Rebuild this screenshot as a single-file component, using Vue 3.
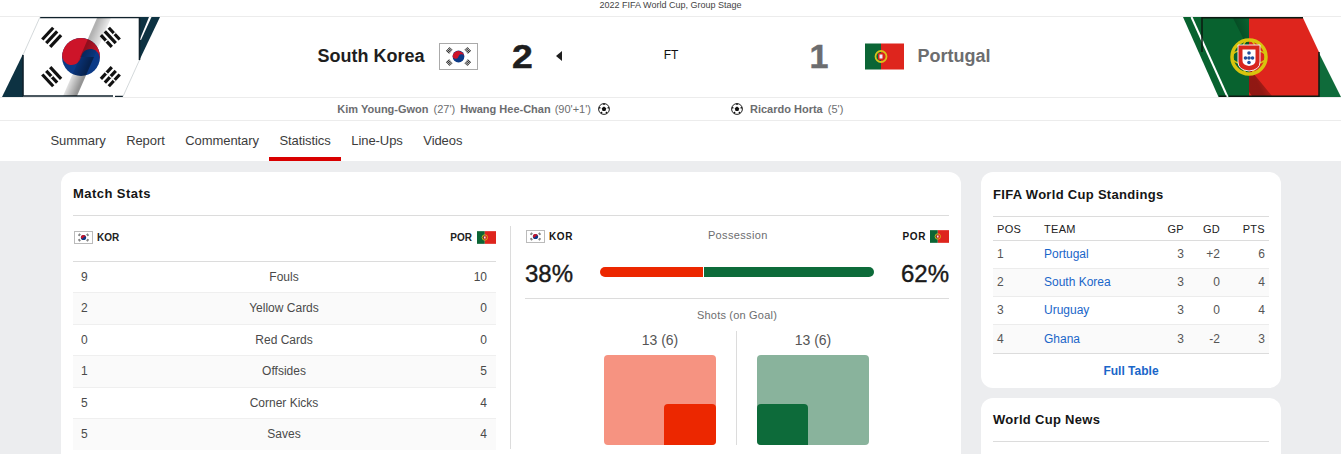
<script setup>
const stats = [
  { a: '9', label: 'Fouls', b: '10' },
  { a: '2', label: 'Yellow Cards', b: '0' },
  { a: '0', label: 'Red Cards', b: '0' },
  { a: '1', label: 'Offsides', b: '5' },
  { a: '5', label: 'Corner Kicks', b: '4' },
  { a: '5', label: 'Saves', b: '4' },
]
const standings = [
  { pos: 1, team: 'Portugal', gp: 3, gd: '+2', pts: 6 },
  { pos: 2, team: 'South Korea', gp: 3, gd: '0', pts: 4 },
  { pos: 3, team: 'Uruguay', gp: 3, gd: '0', pts: 4 },
  { pos: 4, team: 'Ghana', gp: 3, gd: '-2', pts: 3 },
]
const nav = ['Summary', 'Report', 'Commentary', 'Statistics', 'Line-Ups', 'Videos']
const barY = [-7, -1.6, 3.8]
const trigrams = [
  { x: -29.3, y: -19.7, r: -47, broken: [false, false, false] },
  { x: 29.3, y: -19.7, r: 47, broken: [true, false, true] },
  { x: -29.3, y: 19.7, r: 47, broken: [false, true, false] },
  { x: 29.3, y: 19.7, r: -47, broken: [true, true, true] },
]
</script>

<template>
  <div class="page">
    <svg class="defs" width="0" height="0" aria-hidden="true">
      <defs>
        <symbol id="kor" viewBox="0 0 39 26">
          <rect width="39" height="26" fill="#fff" />
          <g transform="translate(19.5 13)">
            <circle r="6.2" fill="#0b3a87" />
            <path d="M-6.1-1A6.2 6.2 0 0 1 6.1 1A3.1 3.1 0 0 0 0 0A3.100 3.100 0 0 1-6.100-1Z" fill="#cd1429" />
            <g stroke="#222" stroke-width="4.500" stroke-dasharray="1 .6">
              <path d="M-11.500-4.500L-8-8.500" />
              <path d="M11.500-4.500L8-8.500" />
              <path d="M-11.500 4.500L-8 8.500" />
              <path d="M11.500 4.500L8 8.500" />
            </g>
          </g>
        </symbol>
        <symbol id="por" viewBox="0 0 39 26">
          <rect width="16" height="26" fill="#0b6535" />
          <rect x="16" width="23" height="26" fill="#de251d" />
          <circle cx="16" cy="13" r="5.500" fill="none" stroke="#d9c21a" stroke-width="1.800" />
          <rect x="13" y="9.500" width="6" height="7" rx="1" fill="#d8261d" />
          <rect x="14.500" y="11" width="3" height="4" fill="#eef" />
        </symbol>
        <symbol id="ball" viewBox="0 0 12 12">
          <circle cx="6" cy="6" r="5.400" fill="#fff" stroke="#222" stroke-width="1" />
          <path d="M6 3.600L8.300 5.300 7.400 8H4.600L3.700 5.300Z" fill="#111" />
          <path d="M6 .6V2M1 4.600L2.400 5M11 4.600L9.600 5M3 10.400L4 9M9 10.400L8 9" stroke="#111" stroke-width="1.400" />
        </symbol>
      </defs>
    </svg>

    <div class="competition">2022 FIFA World Cup, Group Stage</div>

    <header class="banner">
      <svg class="art" width="160" height="80" viewBox="0 17 160 80" aria-hidden="true">
        <defs>
          <linearGradient id="foldTop" gradientUnits="userSpaceOnUse" x1="98" y1="20" x2="112" y2="26">
            <stop offset="0" stop-color="#000" stop-opacity=".3" />
            <stop offset="1" stop-color="#000" stop-opacity="0" />
          </linearGradient>
          <linearGradient id="foldBottom" gradientUnits="userSpaceOnUse" x1="62" y1="88" x2="76" y2="94">
            <stop offset="0" stop-color="#000" stop-opacity="0" />
            <stop offset="1" stop-color="#000" stop-opacity=".42" />
          </linearGradient>
        </defs>
        <path d="M2 97L23 54V97Z" fill="#0d3242" />
        <path d="M139 17H160L139 61Z" fill="#0d3242" />
        <path d="M149 17H151.500L141 40H139.600Z" fill="#fff" />
        <path d="M40 17H139V60L123 97H23V55Z" fill="#fff" />
        <path d="M40 17.500H139.500V60M23 55V96H113M115 96.500H123" fill="none" stroke="#10222c" stroke-width="1.600" />
        <path d="M139.500 60L123 96.500M40 17L23 55" fill="none" stroke="#c9cfd2" stroke-width=".8" />
        <g transform="translate(81 57)">
          <circle r="19" fill="#0b3a87" />
          <path d="M-18.800-3A19 19 0 0 1 18.800 3A9.500 9.500 0 0 0 0 0A9.500 9.500 0 0 1-18.800-3Z" fill="#cd1429" />
          <g v-for="t in trigrams" :key="t.x + '' + t.y" :transform="`translate(${t.x} ${t.y}) rotate(${t.r})`" fill="#111">
            <template v-for="(y, i) in barY" :key="i">
              <rect x="-8" :y="y" width="16" height="3.200" />
              <rect v-if="t.broken[i]" x="-.7" :y="y - .1" width="1.400" height="3.400" fill="#fff" />
            </template>
          </g>
        </g>
        <path d="M97 18H111L94 57H80Z" fill="url(#foldTop)" />
        <path d="M80 57H94L77 96H63Z" fill="url(#foldBottom)" />
      </svg>

      <div class="side side-left">
        <span class="team-name">South Korea</span>
        <svg class="flag flag-bordered" width="39" height="27"><use href="#kor" /></svg>
        <span class="score score-wide">2</span>
        <span class="winner"></span>
      </div>
      <div class="status">FT</div>
      <div class="side side-right muted">
        <span class="score">1</span>
        <svg class="flag" width="39" height="27"><use href="#por" /></svg>
        <span class="team-name">Portugal</span>
      </div>

      <svg class="art" width="158" height="80" viewBox="1183 17 158 80" aria-hidden="true">
        <defs>
          <linearGradient id="shadeA" gradientUnits="userSpaceOnUse" x1="1233" y1="30" x2="1250" y2="24">
            <stop offset="0" stop-color="#000" stop-opacity=".3" />
            <stop offset="1" stop-color="#000" stop-opacity="0" />
          </linearGradient>
          <linearGradient id="shadeB" gradientUnits="userSpaceOnUse" x1="1258" y1="84" x2="1274" y2="76">
            <stop offset="0" stop-color="#000" stop-opacity=".35" />
            <stop offset="1" stop-color="#000" stop-opacity="0" />
          </linearGradient>
        </defs>
        <path d="M1183 17H1249V97H1218.500Z" fill="#08622f" />
        <path d="M1191.500 17L1227.500 97" fill="none" stroke="#fff" stroke-width="2" />
        <path d="M1319 53L1341 97H1319Z" fill="#0f6b3a" />
        <path d="M1249 18H1303L1319 52V96H1249Z" fill="#de251d" />
        <path d="M1233 18H1249V50Z" fill="url(#shadeA)" />
        <path d="M1249 68L1272 96H1252L1249 92Z" fill="url(#shadeB)" />
        <path d="M1202 52V17.800H1303M1219 96.200H1226.500M1229 96.200H1319V52" fill="none" stroke="#0b1a12" stroke-width="1.500" />
        <g transform="translate(1249 57)">
          <circle r="17" fill="none" stroke="#d8c40e" stroke-width="3.500" />
          <ellipse rx="17" ry="8" fill="none" stroke="#d8c40e" stroke-width="1.500" />
          <ellipse rx="8" ry="17" fill="none" stroke="#d8c40e" stroke-width="1.500" />
          <path d="M-11-12H11V5Q11 13 0 14Q-11 13-11 5Z" fill="#d8261d" stroke="#eee" stroke-width="1" />
          <path d="M-6.500-7.500H6.500V4Q6.500 8 0 9Q-6.500 8-6.500 4Z" fill="#fff" />
          <g fill="#24509c">
            <circle cy="-4" r="1.800" /><circle cx="-3.500" cy="1" r="1.800" /><circle cy="1" r="1.800" /><circle cx="3.500" cy="1" r="1.800" /><circle cy="5.500" r="1.800" />
          </g>
        </g>
      </svg>
    </header>

    <div class="scorers">
      <div class="scorer-side scorer-left">
        <b>Kim Young-Gwon</b><span>(27')</span>
        <b class="second">Hwang Hee-Chan</b><span>(90'+1')</span>
        <svg class="ball" width="12" height="12"><use href="#ball" /></svg>
      </div>
      <div class="scorer-gap"></div>
      <div class="scorer-side">
        <svg class="ball" width="12" height="12"><use href="#ball" /></svg>
        <b>Ricardo Horta</b><span>(5')</span>
      </div>
    </div>

    <nav class="tabs">
      <a v-for="item in nav" :key="item" class="tab" :class="{ active: item === 'Statistics' }">{{ item }}</a>
    </nav>

    <main class="content">
      <section class="card stats-card">
        <h2 class="card-title">Match Stats</h2>
        <div class="stats-body">
          <div class="stats-table">
            <div class="team-head">
              <span class="team-tag">
                <svg class="mini mini-bordered" width="19" height="13"><use href="#kor" /></svg>KOR
              </span>
              <span class="team-tag tag-right">POR<svg class="mini" width="19" height="13"><use href="#por" /></svg></span>
            </div>
            <div v-for="(row, i) in stats" :key="row.label" class="stat-row" :class="{ shaded: i % 2 === 1 }">
              <span>{{ row.a }}</span>
              <span class="stat-label">{{ row.label }}</span>
              <span class="stat-right">{{ row.b }}</span>
            </div>
          </div>
          <div class="charts">
            <div class="poss-head">
              <span class="team-tag strong">
                <svg class="mini mini-bordered" width="19" height="13"><use href="#kor" /></svg>KOR
              </span>
              <span class="chart-title">Possession</span>
              <span class="team-tag strong">POR<svg class="mini" width="19" height="13"><use href="#por" /></svg></span>
            </div>
            <div class="poss-row">
              <span class="pct">38%</span>
              <div class="bar">
                <div class="bar-a" style="width: 37.7%"></div>
                <div class="bar-b"></div>
              </div>
              <span class="pct">62%</span>
            </div>
            <div class="shots-title">Shots (on Goal)</div>
            <div class="shots">
              <div class="shot-col shot-left">
                <div class="shot-num">13 (6)</div>
                <div class="goal goal-red"><div class="on-goal on-red"></div></div>
              </div>
              <div class="shot-col shot-right">
                <div class="shot-num">13 (6)</div>
                <div class="goal goal-green"><div class="on-goal on-green"></div></div>
              </div>
            </div>
          </div>
        </div>
      </section>

      <aside class="rail">
        <section class="card side-card">
          <h2 class="card-title side-title">FIFA World Cup Standings</h2>
          <div class="st-row st-head">
            <span>POS</span><span>TEAM</span><span class="num">GP</span><span class="num">GD</span><span class="num">PTS</span>
          </div>
          <div v-for="(r, i) in standings" :key="r.team" class="st-row" :class="{ shaded: i % 2 === 1 }">
            <span>{{ r.pos }}</span>
            <a class="link">{{ r.team }}</a>
            <span class="num">{{ r.gp }}</span>
            <span class="num">{{ r.gd }}</span>
            <span class="num">{{ r.pts }}</span>
          </div>
          <a class="full-table">Full Table</a>
        </section>
        <section class="card side-card news">
          <h2 class="card-title side-title">World Cup News</h2>
        </section>
      </aside>
    </main>
  </div>
</template>

<style>
html, body { margin: 0; background: #fff; overflow: hidden; }
</style>

<style scoped>
.page {
  width: 1341px;
  height: 454px;
  overflow: hidden;
  background: #ecedef;
  font-family: "Liberation Sans", Arial, sans-serif;
  color: #333;
}
.defs { position: absolute; }
.competition {
  height: 16px;
  line-height: 10px;
  background: #fff;
  border-bottom: 1px solid #ececec;
  text-align: center;
  font-size: 9px;
  color: #444;
}
.banner {
  height: 80px;
  background: #fff;
  border-bottom: 1px solid #ececec;
  display: grid;
  grid-template-columns: 160px 1fr 218px 1fr 158px;
  align-items: center;
}
.art { display: block; }
.side { display: flex; align-items: center; height: 78px; padding-bottom: 2px; color: #1e1e1e; }
.side-left { justify-content: flex-end; }
.side-right { padding-left: 29px; }
.muted { color: #6c6d6f; }
.team-name { font-size: 18px; font-weight: 700; }
.flag { display: block; }
.flag-bordered { box-sizing: border-box; border: 1px solid #aaa; margin: 0 36px 0 14px; }
.side-right .flag { margin: 0 13px 0 37px; }
.score { font-size: 34px; font-weight: 700; line-height: 1; -webkit-text-stroke: .5px currentColor; }
.score-wide { transform: scaleX(1.1); transform-origin: right center; }
.winner {
  width: 0;
  height: 0;
  margin: 0 1px 0 23px;
  border-top: 5px solid transparent;
  border-bottom: 5px solid transparent;
  border-right: 6px solid #1e1e1e;
}
.status { text-align: center; font-size: 12px; color: #111; margin: -4px 1px 0 0; }
.scorers {
  height: 22px;
  background: #fff;
  border-bottom: 1px solid #ececec;
  display: grid;
  grid-template-columns: 1fr 121px 1fr;
  align-items: center;
  font-size: 11px;
  color: #6c6d6f;
}
.scorer-side { display: flex; align-items: center; gap: 5px; }
.scorer-left { justify-content: flex-end; }
.second { margin-right: -1px; }
.ball { margin: 0 0 0 2px; }
.scorer-side > .ball:first-child { margin: 0 2px 0 0; }
.tabs {
  height: 40px;
  background: #fff;
  display: flex;
  padding-left: 40px;
}
.tab {
  padding: 0 10.300px;
  line-height: 39px;
  font-size: 13px;
  letter-spacing: -.08px;
  color: #3c3c3c;
  box-sizing: border-box;
  height: 40px;
}
.tab:first-child { padding-left: 10.500px; }
.tab.active { border-bottom: 4px solid #d90000; }
.content {
  display: grid;
  grid-template-columns: 900px 300px;
  gap: 20px;
  padding: 11px 0 0 61px;
}
.card { background: #fff; border-radius: 12px; }
.stats-card { padding: 0 12px; height: 320px; }
.card-title {
  margin: 0;
  font-size: 13px;
  font-weight: 700;
  color: #151515;
  letter-spacing: .3px;
}
.stats-card .card-title {
  height: 43px;
  line-height: 44px;
  letter-spacing: .45px;
  border-bottom: 1px solid #dcdcdc;
}
.stats-body { display: flex; }
.stats-table { width: 423px; }
.team-head {
  display: flex;
  justify-content: space-between;
  align-items: center;
  border-bottom: 1px solid #dcdcdc;
  padding-bottom: 3px;
  box-sizing: border-box;
  height: 46px;
}
.team-tag {
  display: flex;
  align-items: center;
  gap: 4px;
  font-size: 10px;
  font-weight: 700;
  color: #222;
}
.tag-right { gap: 5px; }
.team-tag.strong { font-size: 10px; letter-spacing: .6px; color: #151515; }
.mini { display: block; }
.mini-bordered { box-sizing: border-box; border: 1px solid #bbb; }
.team-tag:first-child { padding-left: 1px; }
.stat-row {
  height: 30px;
  padding: 0 9px 0 8px;
  display: grid;
  grid-template-columns: 40px 1fr 40px;
  align-items: center;
  border-bottom: 1px solid #efefef;
  font-size: 12px;
  color: #4a4a4a;
}
.stat-row.shaded { padding-bottom: 1px; }
.stat-row:last-child { border-bottom: 0; }
.shaded { background: #fafafa; }
.stat-label { text-align: center; }
.stat-right { text-align: right; }
.charts {
  margin: 10px 0 0 14px;
  padding-left: 14px;
  border-left: 1px solid #dcdcdc;
  width: 424px;
  height: 223px;
}
.poss-head {
  display: flex;
  justify-content: space-between;
  align-items: flex-start;
  height: 24px;
  padding-top: 4px;
  box-sizing: border-box;
}
.chart-title {
  font-size: 11px;
  color: #6c6d6f;
  letter-spacing: .35px;
  margin-top: -1px;
}
.poss-row {
  display: flex;
  align-items: center;
  justify-content: space-between;
  height: 48px;
  border-bottom: 1px solid #dcdcdc;
}
.pct { font-size: 24px; color: #1a1a1a; -webkit-text-stroke: .4px #1a1a1a; }
.bar {
  width: 274px;
  height: 10px;
  margin-top: -4px;
  display: flex;
  gap: 1px;
  border-radius: 5px;
  overflow: hidden;
}
.bar-a { background: #ec2700; }
.bar-b { flex: 1; background: #0d6b3a; }
.shots-title {
  font-size: 11px;
  text-align: center;
  color: #6c6d6f;
  height: 32px;
  line-height: 32px;
  letter-spacing: .2px;
}
.shots { display: grid; grid-template-columns: 212px 212px; }
.shot-col { display: flex; flex-direction: column; height: 114px; }
.shot-left { align-items: flex-end; border-right: 1px solid #dcdcdc; padding-right: 20px; box-sizing: border-box; }
.shot-right { align-items: flex-start; padding-left: 20px; }
.shot-num { width: 112px; text-align: center; height: 24px; line-height: 19px; font-size: 14px; color: #555; }
.goal { width: 112px; height: 90px; border-radius: 4px; display: flex; align-items: flex-end; overflow: hidden; }
.goal-red { background: #f69381; justify-content: flex-end; }
.goal-green { background: #89b39c; }
.on-goal { border-radius: 4px 4px 0 0; height: 41px; }
.on-red { width: 52px; background: #ec2700; }
.on-green { width: 51px; background: #0d6b3a; }
.rail { display: flex; flex-direction: column; gap: 10px; }
.side-card { padding: 0 12px; }
.side-title { height: 44px; line-height: 45px; border-bottom: 1px solid #dcdcdc; }
.news .side-title { height: 43px; line-height: 43px; }
.st-row {
  display: grid;
  grid-template-columns: 47px 104px 36px 36px 45px;
  padding: 0 4px 2px;
  align-items: center;
  height: 25px;
  border-bottom: 1px solid #ececec;
  font-size: 12px;
  color: #555;
}
.st-row:last-of-type { padding-bottom: 1px; height: 27px; border-bottom-color: #dcdcdc; }
.st-head { height: 23px; padding-bottom: 0; font-size: 11px; color: #222; letter-spacing: .3px; border-bottom: 1px solid #dcdcdc; }
.num { text-align: right; }
.link { color: #1a66c9; }
.full-table {
  display: block;
  height: 34px;
  line-height: 35px;
  text-align: center;
  font-size: 12px;
  font-weight: 700;
  color: #1a66c9;
}
.news { height: 100px; }
</style>
